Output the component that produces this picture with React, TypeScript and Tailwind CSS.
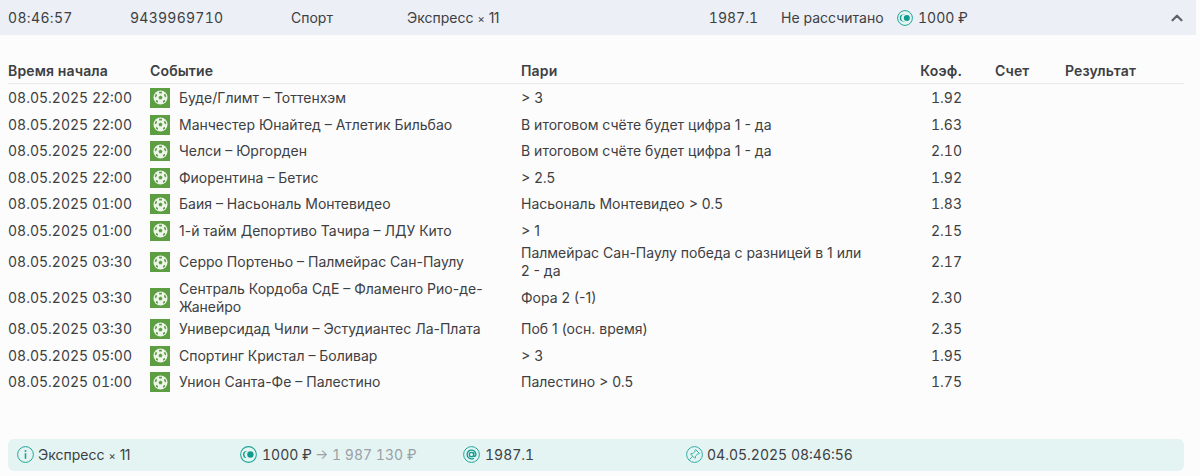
import React from 'react';
import { ChevronUp } from 'lucide-react';

const rows = [
  { time: '08.05.2025 22:00', event: 'Буде/Глимт – Тоттенхэм', bet: '> 3', coef: '1.92' },
  { time: '08.05.2025 22:00', event: 'Манчестер Юнайтед – Атлетик Бильбао', bet: 'В итоговом счёте будет цифра 1 - да', coef: '1.63' },
  { time: '08.05.2025 22:00', event: 'Челси – Юргорден', bet: 'В итоговом счёте будет цифра 1 - да', coef: '2.10' },
  { time: '08.05.2025 22:00', event: 'Фиорентина – Бетис', bet: '> 2.5', coef: '1.92' },
  { time: '08.05.2025 01:00', event: 'Баия – Насьональ Монтевидео', bet: 'Насьональ Монтевидео > 0.5', coef: '1.83' },
  { time: '08.05.2025 01:00', event: '1-й тайм Депортиво Тачира – ЛДУ Кито', bet: '> 1', coef: '2.15' },
  { time: '08.05.2025 03:30', event: 'Серро Портеньо – Палмейрас Сан-Паулу', bet: 'Палмейрас Сан-Паулу победа с разницей в 1 или 2 - да', coef: '2.17' },
  { time: '08.05.2025 03:30', event: 'Сентраль Кордоба СдЕ – Фламенго Рио-де-Жанейро', bet: 'Фора 2 (-1)', coef: '2.30' },
  { time: '08.05.2025 03:30', event: 'Универсидад Чили – Эстудиантес Ла-Плата', bet: 'Поб 1 (осн. время)', coef: '2.35' },
  { time: '08.05.2025 05:00', event: 'Спортинг Кристал – Боливар', bet: '> 3', coef: '1.95' },
  { time: '08.05.2025 01:00', event: 'Унион Санта-Фе – Палестино', bet: 'Палестино > 0.5', coef: '1.75' },
];

const SoccerIcon = () => (
  <span className="flex h-5 w-5 shrink-0 items-center justify-center bg-[#5c9e41]">
    <svg width="15" height="15" viewBox="0 0 15 15">
      <circle cx="7.5" cy="7.5" r="7" fill="#eef5ea" />
      <polygon points="7.5,5.4 9.5,6.9 8.7,9.2 6.3,9.2 5.5,6.9" fill="#5c9e41" />
      <polygon points="6,1.7 9,1.7 8.8,3.4 6.2,3.4" fill="#5c9e41" />
      <polygon points="12,3.6 13.3,6.2 12.2,7.4 10.8,5" fill="#5c9e41" />
      <polygon points="3,3.6 1.7,6.2 2.8,7.4 4.2,5" fill="#5c9e41" />
      <polygon points="3.2,9.8 5,11 5,12.8 2.9,11.8" fill="#5c9e41" />
      <polygon points="11.8,9.8 10,11 10,12.8 12.1,11.8" fill="#5c9e41" />
    </svg>
  </span>
);

const StakeIcon = ({ size = 16 }: { size?: number }) => (
  <svg width={size} height={size} viewBox="0 0 16 16" className="shrink-0">
    <circle cx="8" cy="8" r="7.4" fill="#e6f4f2" stroke="#1fa598" strokeWidth="1" />
    <circle cx="6.2" cy="8" r="3.4" fill="#0f9c8e" />
    <circle cx="7.6" cy="8" r="3.4" fill="#e6f4f2" />
    <circle cx="9.8" cy="8" r="3" fill="#0f9c8e" />
  </svg>
);

const InfoIcon = () => (
  <svg width="17" height="17" viewBox="0 0 17 17" className="shrink-0" fill="none">
    <circle cx="8.5" cy="8.5" r="7.9" stroke="#1fa598" strokeWidth="1" />
    <circle cx="8.5" cy="4.9" r="1" fill="#1fa598" />
    <path d="M8.5 7.2v5.6" stroke="#1fa598" strokeWidth="1.6" />
  </svg>
);

const AtIcon = () => (
  <svg width="17" height="17" viewBox="0 0 17 17" className="shrink-0" fill="none">
    <circle cx="8.5" cy="8.5" r="7.9" stroke="#1fa598" strokeWidth="1" />
    <circle cx="8.5" cy="8.5" r="2.2" stroke="#0f9c8e" strokeWidth="1.3" />
    <path d="M10.7 6.2v3.2c0 1.5 2.2 1.4 2.2-.9a4.4 4.4 0 1 0-2 3.7" stroke="#0f9c8e" strokeWidth="1.3" />
  </svg>
);

const PinIcon = () => (
  <svg width="17" height="17" viewBox="0 0 17 17" className="shrink-0" fill="none" stroke="#1fa598" strokeWidth="0.9">
    <circle cx="8.5" cy="8.5" r="7.9" />
    <path d="M9.6 3.6 13.4 7.4 12.6 8 11.8 7.8 9.4 10.2 9.5 11.8 8.9 12.4 4.6 8.1 5.2 7.5 6.8 7.6 9.2 5.2 9 4.4Z" />
    <path d="M6.6 10.4 3.6 13.4" />
  </svg>
);

const ExpressLabel = () => (
  <span>
    Экспресс <span className="text-[11px]">×</span> <span className="tracking-[-0.6px]">11</span>
  </span>
);

export default function App() {
  return (
    <div className="h-[476px] w-[1200px] overflow-hidden bg-[#fcfcfc] font-['Inter','Liberation_Sans',sans-serif] text-[14px] text-[#3c4043]">
      {/* Summary row */}
      <div className="mr-1 flex h-[35px] items-center bg-[#eceff5] pl-2">
        <span className="w-[122px] tabular-nums tracking-[0.35px]">08:46:57</span>
        <span className="w-[161px] tabular-nums tracking-[0.25px]">9439969710</span>
        <span className="w-[116px]">Спорт</span>
        <span className="w-[279px]">
          <ExpressLabel />
        </span>
        <span className="w-[72px] text-right tabular-nums">1987.1</span>
        <span className="ml-[23px] w-[116px] whitespace-nowrap">Не рассчитано</span>
        <span className="flex items-center gap-[5px] tabular-nums">
          <StakeIcon />
          1000 ₽
        </span>
        <ChevronUp className="ml-auto mr-[10px] h-[18px] w-[18px] text-[#5f6368]" strokeWidth={3} />
      </div>

      {/* Events table */}
      <table className="ml-2 mt-[21px] w-[1176px] table-fixed border-collapse">
        <colgroup>
          <col className="w-[142px]" />
          <col className="w-[371px]" />
          <col className="w-[372px]" />
          <col className="w-[69px]" />
          <col className="w-[102px]" />
          <col />
        </colgroup>
        <thead>
          <tr className="h-[27px] border-b border-[#e8eaed] text-left tracking-[0.15px]">
            <th className="pt-[2px] font-semibold">Время начала</th>
            <th className="pt-[2px] font-semibold">Событие</th>
            <th className="pt-[2px] font-semibold">Пари</th>
            <th className="pt-[2px] text-right font-semibold">Коэф.</th>
            <th className="pl-[33px] pt-[2px] font-semibold">Счет</th>
            <th className="pl-px pt-[2px] text-left font-semibold">Результат</th>
          </tr>
        </thead>
        <tbody>
          {rows.map((row, i) => (
            <tr key={i} className="h-[26.5px] leading-[18px] first:h-[28.5px]">
              <td className="tabular-nums">{row.time}</td>
              <td>
                <div className="flex items-center gap-[9px] pr-6">
                  <SoccerIcon />
                  <span>{row.event}</span>
                </div>
              </td>
              <td className="pr-[28px]">{row.bet}</td>
              <td className="text-right tabular-nums">{row.coef}</td>
              <td />
              <td />
            </tr>
          ))}
        </tbody>
      </table>

      {/* Bottom info bar */}
      <div className="ml-2 mt-[43px] flex h-8 w-[1176px] items-center rounded-md bg-[#e4f4f3] pl-[9px]">
        <span className="flex w-[223px] items-center gap-1">
          <InfoIcon />
          <ExpressLabel />
        </span>
        <span className="flex w-[223px] items-center gap-[3px] tabular-nums">
          <StakeIcon size={17} />
          <span className="ml-[2px]">1000 ₽</span>
          <span className="text-[#9aa0a6]">→ 1 987 130 ₽</span>
        </span>
        <span className="flex w-[223px] items-center gap-[5px] tabular-nums">
          <AtIcon />
          1987.1
        </span>
        <span className="flex items-center gap-1 tabular-nums">
          <PinIcon />
          04.05.2025 08:46:56
        </span>
      </div>
    </div>
  );
}
